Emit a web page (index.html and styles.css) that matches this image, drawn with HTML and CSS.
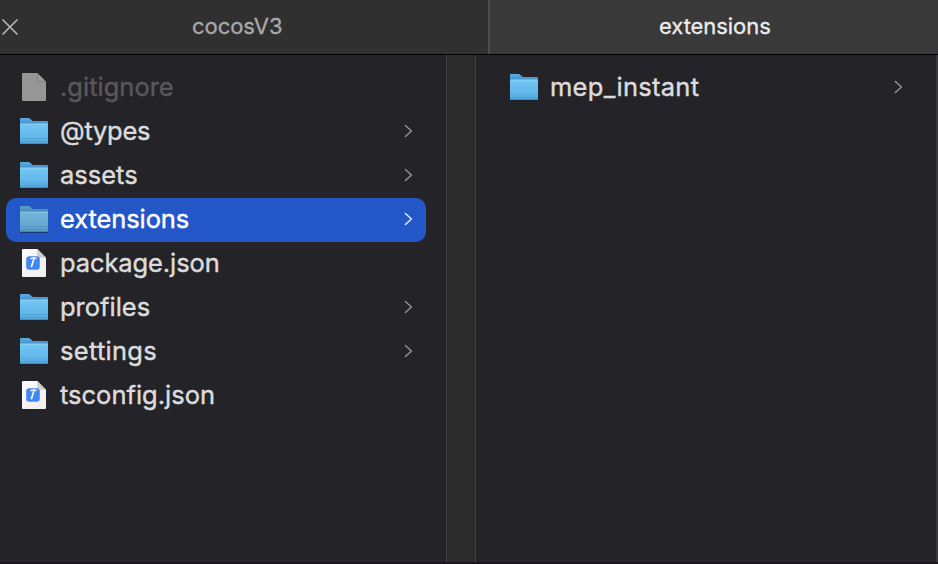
FILE: index.html
```
<!DOCTYPE html>
<html lang="en">
<head>
<meta charset="utf-8">
<title>cocosV3</title>
<link rel="stylesheet" href="styles.css">
</head>
<body>
<svg class="defs" aria-hidden="true">
  <defs>
    <linearGradient id="front" x1="0" y1="0" x2="0" y2="1">
      <stop offset="0" stop-color="#74c6f3"/><stop offset=".65" stop-color="#62b7eb"/><stop offset="1" stop-color="#52a5da"/>
    </linearGradient>
    <linearGradient id="back" x1="0" y1="0" x2="0" y2="1">
      <stop offset="0" stop-color="#5cafe3"/><stop offset="1" stop-color="#3c8bc7"/>
    </linearGradient>
    <linearGradient id="paper" x1="0" y1="0" x2="1" y2="1">
      <stop offset="0" stop-color="#fcfcfc"/><stop offset="1" stop-color="#eeeeef"/>
    </linearGradient>
    <symbol id="folder" viewBox="0 0 32 32">
      <rect x="2" y="27" width="28" height="3" rx="1" fill="#101015" opacity=".5"/>
      <path d="M2 9V4q0-1 1-1h7.5q1 0 1.7.7l1.3 1.3q.9.9 1.9.9H29q1 0 1 1V10z" fill="url(#back)"/>
      <path d="M2 9.4q0-.8.8-.8h26.4q.8 0 .8.8v18.4q0 1.2-1.2 1.2H3.2Q2 29 2 27.8z" fill="url(#front)"/>
      <path d="M2.3 9.3h27.4" stroke="#88d3f8" stroke-width="1"/>
      <path d="M2 23.5h28M2 26.5h28" stroke="#449bd0" stroke-width=".8" opacity=".5"/>
      <path d="M3 28.7h26" stroke="#347eaf" stroke-width=".7"/>
    </symbol>
    <symbol id="page" viewBox="0 0 32 32">
      <path d="M4 3q0-1 1-1h14.5l8.5 8.5V29q0 1-1 1H5q-1 0-1-1z"/>
      <path d="M19.5 2v7.3q0 1.2 1.2 1.2H28z" fill="#000" opacity=".24"/>
      <path d="M20 2.8v6.4q0 .8.8.8H27z" fill="#fff" opacity=".3"/>
    </symbol>
    <symbol id="json" viewBox="0 0 32 32">
      <use href="#page" fill="url(#paper)"/>
      <rect x="8.2" y="9.2" width="13.6" height="13.6" rx="3.2" fill="#4087f6"/>
      <path d="M12.4 12q2-1.4 4-1l2.2.7" fill="none" stroke="#fff" stroke-width="1.3"/>
      <path d="M16 11.4l-2.7 8.9" fill="none" stroke="#fff" stroke-width="1.6"/>
    </symbol>
    <symbol id="chevron" viewBox="0 0 10 16">
      <path d="M2.4 2.5 8.4 8l-6 5.5" fill="none" stroke="currentColor" stroke-width="1.5" stroke-linecap="round" stroke-linejoin="round"/>
    </symbol>
  </defs>
</svg>
<div class="window">
  <header class="tabs">
    <div class="tab">
      <svg class="close" viewBox="0 0 16 16"><path d="M1 1 15 15M15 1 1 15"/></svg>
      <span class="title">cocosV3</span>
    </div>
    <div class="tab active"><span class="title">extensions</span></div>
  </header>
  <main class="columns">
    <ul class="column">
      <li class="row muted"><svg class="icon"><use href="#page"/></svg><span class="name">.gitignore</span></li>
      <li class="row"><svg class="icon"><use href="#folder"/></svg><span class="name tight">@types</span><svg class="chevron"><use href="#chevron"/></svg></li>
      <li class="row"><svg class="icon"><use href="#folder"/></svg><span class="name">assets</span><svg class="chevron"><use href="#chevron"/></svg></li>
      <li class="row selected"><svg class="icon"><use href="#folder"/></svg><span class="name snug">extensions</span><svg class="chevron"><use href="#chevron"/></svg></li>
      <li class="row"><svg class="icon"><use href="#json"/></svg><span class="name snug">package.json</span></li>
      <li class="row"><svg class="icon"><use href="#folder"/></svg><span class="name">profiles</span><svg class="chevron"><use href="#chevron"/></svg></li>
      <li class="row"><svg class="icon"><use href="#folder"/></svg><span class="name wide">settings</span><svg class="chevron"><use href="#chevron"/></svg></li>
      <li class="row"><svg class="icon"><use href="#json"/></svg><span class="name">tsconfig.json</span></li>
    </ul>
    <div class="gutter"></div>
    <ul class="column second">
      <li class="row"><svg class="icon"><use href="#folder"/></svg><span class="name wide">mep_instant</span><svg class="chevron"><use href="#chevron"/></svg></li>
    </ul>
    <div class="edge"></div>
  </main>
</div>
</body>
</html>
```
FILE: styles.css
```
* { box-sizing: border-box; }
body { margin: 0; background: #242328; font-family: Inter, "Liberation Sans", sans-serif; }
.defs { position: absolute; width: 0; height: 0; }
.window { width: 938px; height: 564px; display: flex; flex-direction: column; overflow: hidden; border-bottom: 2px solid #1e131e; }
.tabs { display: flex; flex: none; height: 55px; border-bottom: 1px solid #000; }
.tab { display: flex; align-items: center; width: 488px; background: #303031; color: #a9a9aa; font-size: 22px; line-height: 26px; letter-spacing: -.06px; -webkit-text-stroke: .3px currentColor; padding: 0 0 2px 2px; }
.tab.active { width: 450px; background: #39393a; border-left: 2px solid #4c4c4d; color: #ececec; padding-left: 169px; }
.close { width: 16px; height: 16px; margin: 1px 174px 0 0; fill: none; stroke: #b5b5b6; stroke-width: 1.7; stroke-linecap: round; }
.columns { display: flex; flex: 1; }
.column { list-style: none; margin: 0; width: 446px; padding: 11px 20px 0 6px; }
.column.second { width: 460px; padding: 11px 20px 0 20px; }
.gutter { width: 30px; background: #2c2c2c; border: solid #414142; border-width: 0 1px; }
.edge { width: 2px; background: #39393a; }
.row { display: flex; align-items: center; height: 44px; padding: 0 12px 2px; color: #dcdcdd; }
.row.selected { background: #2357c7; border-radius: 10px; color: #fff; }
.icon { width: 32px; height: 32px; flex: none; margin-right: 10px; }
.name { flex: 1; white-space: nowrap; font-size: 25.5px; line-height: 34px; -webkit-text-stroke: .4px currentColor; }
.name.tight { letter-spacing: -.25px; }
.name.snug { letter-spacing: -.1px; }
.name.wide { letter-spacing: .28px; }
.muted .icon { fill: #969696; }
.muted .name { color: #58585b; }
.chevron { width: 10px; height: 16px; flex: none; color: #939396; margin-right: 1px; }
.selected .chevron { color: #e3eafa; }
.selected .icon { filter: brightness(.93) saturate(.85); }
```
